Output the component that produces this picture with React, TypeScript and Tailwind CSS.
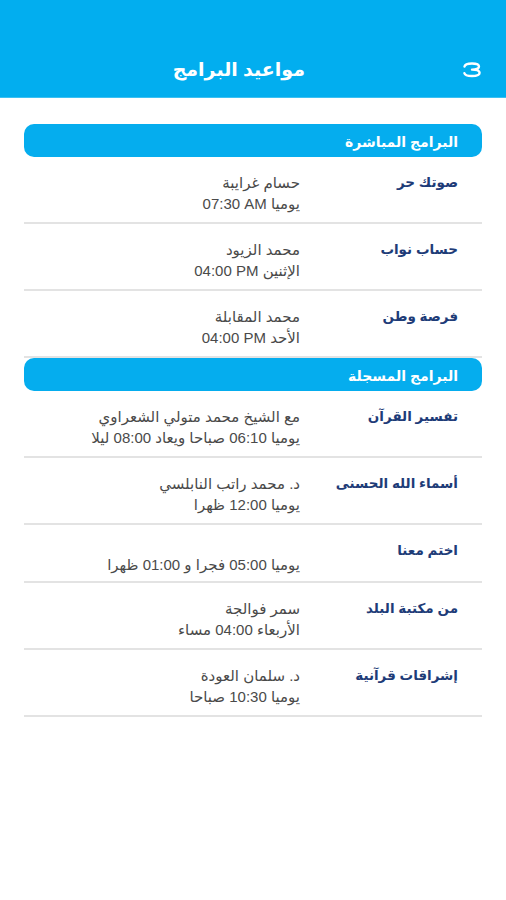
import React from 'react';

type Program = {
  title: string;
  host?: string;
  day: string;
  time: string;
  suffix?: string;
};

const live: Program[] = [
  { title: 'صوتك حر', host: 'حسام غرايبة', day: 'يوميا', time: '07:30 AM' },
  { title: 'حساب نواب', host: 'محمد الزيود', day: 'الإثنين', time: '04:00 PM' },
  { title: 'فرصة وطن', host: 'محمد المقابلة', day: 'الأحد', time: '04:00 PM' },
];

const recorded: Program[] = [
  { title: 'تفسير القرآن', host: 'مع الشيخ محمد متولي الشعراوي', day: 'يوميا', time: '06:10', suffix: 'صباحا ويعاد 08:00 ليلا' },
  { title: 'أسماء الله الحسنى', host: 'د. محمد راتب النابلسي', day: 'يوميا', time: '12:00', suffix: 'ظهرا' },
  { title: 'اختم معنا', day: 'يوميا', time: '05:00', suffix: 'فجرا و 01:00 ظهرا' },
  { title: 'من مكتبة البلد', host: 'سمر فوالجة', day: 'الأربعاء', time: '04:00', suffix: 'مساء' },
  { title: 'إشراقات قرآنية', host: 'د. سلمان العودة', day: 'يوميا', time: '10:30', suffix: 'صباحا' },
];

const SectionBar = ({ label }: { label: string }) => (
  <div className="h-[33px] rounded-[10px] bg-[#05adee] flex items-center pr-[24px] pt-[3px]">
    <span className="text-white text-[14px] font-bold">{label}</span>
  </div>
);

const TimeLine = ({ p }: { p: Program }) => (
  <div>
    {p.day} <bdi dir="ltr">{p.time}</bdi>
    {p.suffix ? ` ${p.suffix}` : ''}
  </div>
);

const Row = ({ p }: { p: Program }) => (
  <div className="flex border-b-2 border-[#e3e3e3]">
    <div className="w-[182px] shrink-0 pr-[24px] pt-[16px] text-[13.5px] leading-[20px] font-bold text-[#1e3c78]">
      {p.title}
    </div>
    {p.host ? (
      <div className="pt-[15px] pb-[8px] text-[15px] leading-[21px] text-[#4a4a4a]">
        <div>{p.host}</div>
        <TimeLine p={p} />
      </div>
    ) : (
      <div className="pt-[29px] pb-[6px] text-[15px] leading-[21px] text-[#4a4a4a]">
        <TimeLine p={p} />
      </div>
    )}
  </div>
);

export default function App() {
  return (
    <div
      dir="rtl"
      className="w-[506px] h-[900px] bg-white"
      style={{ fontFamily: '"Liberation Sans", "DejaVu Sans", sans-serif' }}
    >
      {/* top bar */}
      <div className="h-[98px] bg-[#02aeef] border-b border-[#3cc0f2] flex items-end pb-[12px] pr-[24px]">
        <div className="w-[20px] h-[30px] flex items-center">
          <svg width="20" height="16" viewBox="0 0 20 16" fill="none">
            <path
              d="M2.5 4.5 C3 2 6 1.5 10 1.5 C14.5 1.5 17 2.5 17 4.6 C17 6.8 14.5 7.6 10 7.6 C15 7.6 17.6 8.6 17.6 10.8 C17.6 13 15 14 10 14 C6 14 3 13.6 2.4 11.2"
              stroke="white"
              strokeWidth="2.4"
              strokeLinecap="round"
              strokeLinejoin="round"
            />
          </svg>
        </div>
        <h1 className="mr-[157px] text-white text-[19px] font-bold leading-[30px]">مواعيد البرامج</h1>
      </div>

      <div className="px-[24px] pt-[26px]">
        <SectionBar label="البرامج المباشرة" />
        {live.map((p) => (
          <Row key={p.title} p={p} />
        ))}
        <SectionBar label="البرامج المسجلة" />
        {recorded.map((p) => (
          <Row key={p.title} p={p} />
        ))}
      </div>
    </div>
  );
}
